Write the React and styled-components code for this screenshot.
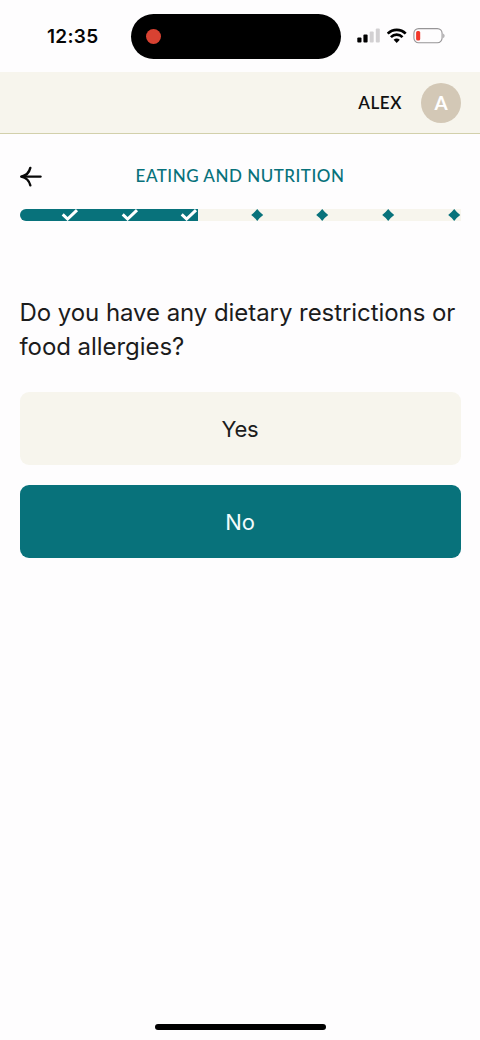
import React from "react";
import styled, { createGlobalStyle } from "styled-components";

const teal = "#08727b";
const cream = "#f7f5ed";

const GlobalStyle = createGlobalStyle`
  * { box-sizing: border-box; }
  body { margin: 0; background: #fefdfe; }
`;

const Screen = styled.div`
  display: flex;
  flex-direction: column;
  width: 480px;
  height: 1040px;
  overflow: hidden;
  background: #fefdfe;
  color: #151515;
  font-family: Inter, "Liberation Sans", sans-serif;
`;

const StatusBar = styled.header`
  display: flex;
  align-items: center;
  height: 72px;
  padding-left: 47px;
`;

const Time = styled.time`
  width: 84px;
  padding-top: 1px;
  color: #060606;
  font-size: 19px;
  font-weight: 600;
  line-height: 24px;
  letter-spacing: 0.3px;
`;

const Island = styled.div`
  display: flex;
  align-items: center;
  width: 210px;
  height: 45px;
  padding-left: 15px;
  border-radius: 23px;
  background: #000;
`;

const RecordingDot = styled.span`
  width: 15px;
  height: 15px;
  border-radius: 50%;
  background: #d84232;
`;

const StatusIcons = styled.div`
  display: flex;
  align-items: center;
  gap: 6px;
  margin-left: 16px;
`;

const AccountBar = styled.div`
  display: flex;
  align-items: center;
  justify-content: flex-end;
  gap: 19px;
  height: 62px;
  padding-right: 19px;
  border-bottom: 1px solid #d2d0ab;
  background: ${cream};
  font-family: Lato, sans-serif;
`;

const AccountName = styled.span`
  color: #111;
  font-size: 17px;
  font-weight: 600;
  letter-spacing: 0.6px;
`;

const Avatar = styled.span`
  display: flex;
  align-items: center;
  justify-content: center;
  width: 40px;
  height: 40px;
  border-radius: 50%;
  background: #d3c8b6;
  color: #fff;
  font-size: 19px;
  font-weight: 700;
`;

const Main = styled.main`
  flex: 1;
  padding: 26px 19.5px 0;
`;

const SectionHeader = styled.div`
  display: grid;
  grid-template-columns: 24px 1fr 24px;
  align-items: center;
  height: 32px;
`;

const BackButton = styled.button`
  display: flex;
  padding: 0;
  border: 0;
  background: none;
`;

const SectionTitle = styled.h1`
  margin: 0;
  color: ${teal};
  font-family: Lato, sans-serif;
  font-size: 17px;
  font-weight: 500;
  line-height: 24px;
  letter-spacing: 0.5px;
  text-align: center;
  white-space: nowrap;
`;

const Progress = styled.div`
  display: flex;
  height: 12px;
  margin-top: 17px;
  border-radius: 6px 0 0 6px;
  background: ${cream};
`;

const Completed = styled.div`
  display: flex;
  width: 178.5px;
  border-radius: 6px 0 0 6px;
  background: ${teal};
`;

const Remaining = styled.div`
  display: flex;
  flex: 1;
`;

const Step = styled.span`
  display: flex;
  flex: 1;
  align-items: center;
  justify-content: flex-end;
`;

const Question = styled.h2`
  margin: 75px 0 0;
  color: #1c1c1c;
  font-size: 24px;
  font-weight: 400;
  line-height: 34px;
  letter-spacing: -0.06px;
  white-space: nowrap;
`;

const Answers = styled.div`
  display: flex;
  flex-direction: column;
  gap: 20px;
  margin-top: 28px;
`;

const Answer = styled.button`
  height: 73px;
  padding: 0;
  border: 0;
  border-radius: 9px;
  background: ${(p) => (p.$selected ? teal : cream)};
  color: ${(p) => (p.$selected ? "#f2fbfb" : "#1c1c1c")};
  font-family: inherit;
  font-size: 22px;
  font-weight: 400;
  letter-spacing: -0.2px;
`;

const HomeArea = styled.footer`
  display: flex;
  justify-content: center;
  height: 16px;
`;

const HomeIndicator = styled.span`
  width: 171px;
  height: 6px;
  border-radius: 3px;
  background: #000;
`;

const Signal = () => (
  <svg width="24" height="16" viewBox="0 0 24 16">
    <rect x="0.3" y="9.4" width="4.2" height="5.2" rx="1" fill="#000" />
    <rect x="6.4" y="6.4" width="4.2" height="8.2" rx="1" fill="#000" />
    <rect x="12.7" y="3.5" width="4" height="11.1" rx="1" fill="#d2d0d2" />
    <rect x="18.8" y="0.4" width="4" height="14.2" rx="1" fill="#d2d0d2" />
  </svg>
);

const Wifi = () => (
  <svg width="20" height="16" viewBox="0.3 0 20 16" fill="none" stroke="#000" strokeWidth="2.7">
    <path d="M1 5.6C6 .6 14 .6 19 5.6" />
    <path d="M4.2 9.1c3.3-3.2 8.3-3.2 11.6 0" />
    <path d="M6.9 11.8c1.8-1.7 4.4-1.7 6.2 0L10 15z" fill="#000" stroke="none" />
  </svg>
);

const Battery = () => (
  <svg width="32" height="16" viewBox="-0.3 -0.2 32 16">
    <rect x="0.6" y="0.4" width="28.2" height="14.2" rx="4.7" fill="none" stroke="#979597" strokeWidth="1.1" />
    <rect x="2.8" y="2.8" width="4.1" height="9.4" rx="1.5" fill="#f2382b" />
    <path d="M30 5.4c1.6.8 1.6 3.8 0 4.6z" fill="#979597" />
  </svg>
);

const BackArrow = () => (
  <svg width="24" height="22" viewBox="0.7 -0.6 24 22" fill="none" stroke="#080808" strokeWidth="2.4" strokeLinecap="round">
    <path d="M2.5 11h18.7" />
    <path d="M11 2.3C9.8 7.3 6.4 10.2 2 11c4.4.8 7.8 3.7 9 8.7" strokeLinejoin="round" />
  </svg>
);

const Check = () => (
  <svg width="18" height="12" viewBox="0 0 18 12" fill="none" stroke="#fff" strokeWidth="3">
    <path d="M1.7 5.4l4.9 4.6L16 1.1" />
  </svg>
);

const Diamond = () => (
  <svg width="13" height="12" viewBox="0.3 0 13 12">
    <path d="M6.5.1Q9 3.4 12.5 6 9 8.6 6.5 11.9 4 8.6.5 6 4 3.4 6.5.1z" fill={teal} />
  </svg>
);

export default function App() {
  return (
    <Screen>
      <GlobalStyle />
      <StatusBar>
        <Time>12:35</Time>
        <Island>
          <RecordingDot />
        </Island>
        <StatusIcons>
          <Signal />
          <Wifi />
          <Battery />
        </StatusIcons>
      </StatusBar>
      <AccountBar>
        <AccountName>ALEX</AccountName>
        <Avatar>A</Avatar>
      </AccountBar>
      <Main>
        <SectionHeader>
          <BackButton aria-label="Back">
            <BackArrow />
          </BackButton>
          <SectionTitle>EATING AND NUTRITION</SectionTitle>
        </SectionHeader>
        <Progress>
          <Completed>
            {[1, 2, 3].map((n) => (
              <Step key={n}>
                <Check />
              </Step>
            ))}
          </Completed>
          <Remaining>
            {[4, 5, 6, 7].map((n) => (
              <Step key={n}>
                <Diamond />
              </Step>
            ))}
          </Remaining>
        </Progress>
        <Question>
          Do you have any dietary restrictions or
          <br />
          food allergies?
        </Question>
        <Answers>
          <Answer>Yes</Answer>
          <Answer $selected>No</Answer>
        </Answers>
      </Main>
      <HomeArea>
        <HomeIndicator />
      </HomeArea>
    </Screen>
  );
}
